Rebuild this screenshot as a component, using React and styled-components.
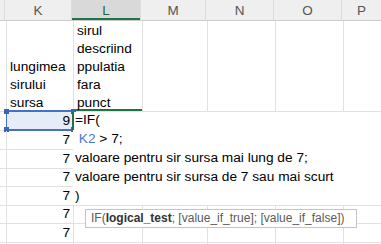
import styled, { createGlobalStyle, css } from 'styled-components'

const GlobalStyle = createGlobalStyle`
  body {
    margin: 0;
    background: #fff;
    overflow: hidden;
    font-family: "Liberation Sans", Arial, sans-serif;
  }
`

// column widths include the 1px gridline on the right
const cols = [
  { name: 'J', w: 5 },
  { name: 'K', w: 67 },
  { name: 'L', w: 69, active: true },
  { name: 'M', w: 65 },
  { name: 'N', w: 68 },
  { name: 'O', w: 68 },
  { name: 'P', w: 40 },
]

const rowHeights = [91, 19, 19, 19, 18, 19, 18, 19, 19]

const Sheet = styled.div`
  position: relative;
  width: 381px;
  height: 244px;
  overflow: hidden;
  font-size: 13.7px;
  color: #000;
`

const Row = styled.div`
  display: flex;
  height: ${p => p.$h}px;
`

const HeadCell = styled.div`
  box-sizing: border-box;
  width: ${p => p.$w}px;
  flex: none;
  display: flex;
  align-items: center;
  justify-content: center;
  padding-top: 1px;
  background: #efefef;
  border-right: 1px solid #dcdcdc;
  border-bottom: 1px solid #cbcbcb;
  color: #555;
  font-size: 13.5px;
  ${p => p.$active && css`
    background: #d9d9d9;
    color: #285f40;
    box-shadow: inset 0 -2px 0 #217346;
  `}
`

const Cell = styled.div`
  position: relative;
  box-sizing: border-box;
  width: ${p => p.$w}px;
  flex: none;
  display: flex;
  flex-direction: column;
  justify-content: ${p => (p.$top ? 'flex-end' : 'center')};
  align-items: ${p => (p.$num ? 'flex-end' : 'flex-start')};
  padding: 0 3px 0 3px;
  border-right: 1px solid #e1e1e1;
  border-bottom: 1px solid #e1e1e1;
  line-height: 18.1px;
  white-space: nowrap;
  ${p => p.$top && css`
    > div { position: relative; top: 1px; }
  `}
  ${p => p.$active && css`
    box-shadow: inset 0 -2px 0 #217346;
  `}
  ${p => p.$ref && css`
    background: #e6edf8;
  `}
`

const RefFrame = styled.div`
  position: absolute;
  left: -1px;
  top: -2px;
  right: -1px;
  bottom: -1px;
  border: 2px solid #4472c4;
  border-width: 2px 1px 2px 1px;
  pointer-events: none;
`

const Handle = styled.span`
  position: absolute;
  width: 5px;
  height: 5px;
  background: #3a66b8;
  ${p => (p.$x === 'l' ? 'left: -3px;' : 'right: -3px;')}
  ${p => (p.$y === 't' ? 'top: -3px;' : 'bottom: -3px;')}
`

const Editor = styled.div`
  position: absolute;
  left: 73px;
  top: 112px;
  right: 0;
  height: 93px;
  background: #fff;
  padding: 0 0 0 2px;
  line-height: 18.9px;
  white-space: pre;
  &::before {
    content: '';
    position: absolute;
    left: -1px;
    top: 0;
    width: 2px;
    height: 18px;
    background: #217346;
  }
`

const EditLine = styled.div`
  height: 18.9px;
  margin-top: ${p => (p.$first ? '-1px' : '0')};
`

const RefText = styled.span`
  color: #4a7bd0;
`

const Tip = styled.div`
  position: absolute;
  left: 85px;
  top: 209px;
  width: 272px;
  height: 19px;
  box-sizing: border-box;
  background: #fff;
  border: 1px solid #c4c4c4;
  padding: 0 0 0 5px;
  font-size: 12px;
  line-height: 17px;
  color: #5a5a5a;
  white-space: nowrap;
  b {
    color: #333;
  }
`

const data = [
  { K: ['lungimea', 'sirului', 'sursa'], L: ['sirul', 'descriind', 'ppulatia', 'fara', 'punct'] },
  { K: '9' },
  { K: '7' },
  { K: '7' },
  { K: '7' },
  { K: '7' },
  { K: '7' },
  { K: '7' },
  { K: '' },
]

export default function App() {
  return (
    <>
      <GlobalStyle />
      <Sheet>
        <Row $h={21}>
          {cols.map(c => (
            <HeadCell key={c.name} $w={c.w} $active={c.active}>{c.name !== 'J' && c.name}</HeadCell>
          ))}
        </Row>
        {data.map((r, i) => (
          <Row key={i} $h={rowHeights[i]}>
            {cols.map(c => {
              const v = r[c.name]
              if (i === 0) {
                return (
                  <Cell key={c.name} $w={c.w} $top $active={c.active}>
                    {Array.isArray(v) && v.map(t => <div key={t}>{t}</div>)}
                  </Cell>
                )
              }
              const isRef = i === 1 && c.name === 'K'
              return (
                <Cell key={c.name} $w={c.w} $num $ref={isRef}>
                  {v}
                  {isRef && (
                    <RefFrame>
                      <Handle $x="l" $y="t" />
                      <Handle $x="r" $y="t" />
                      <Handle $x="l" $y="b" />
                      <Handle $x="r" $y="b" />
                    </RefFrame>
                  )}
                </Cell>
              )
            })}
          </Row>
        ))}
        <Editor>
          <EditLine $first>=IF(</EditLine>
          <EditLine> <RefText>K2</RefText> &gt; 7;</EditLine>
          <EditLine>valoare pentru sir sursa mai lung de 7;</EditLine>
          <EditLine>valoare pentru sir sursa de 7 sau mai scurt</EditLine>
          <EditLine>)</EditLine>
        </Editor>
        <Tip>
          IF(<b>logical_test</b>; [value_if_true]; [value_if_false])
        </Tip>
      </Sheet>
    </>
  )
}
